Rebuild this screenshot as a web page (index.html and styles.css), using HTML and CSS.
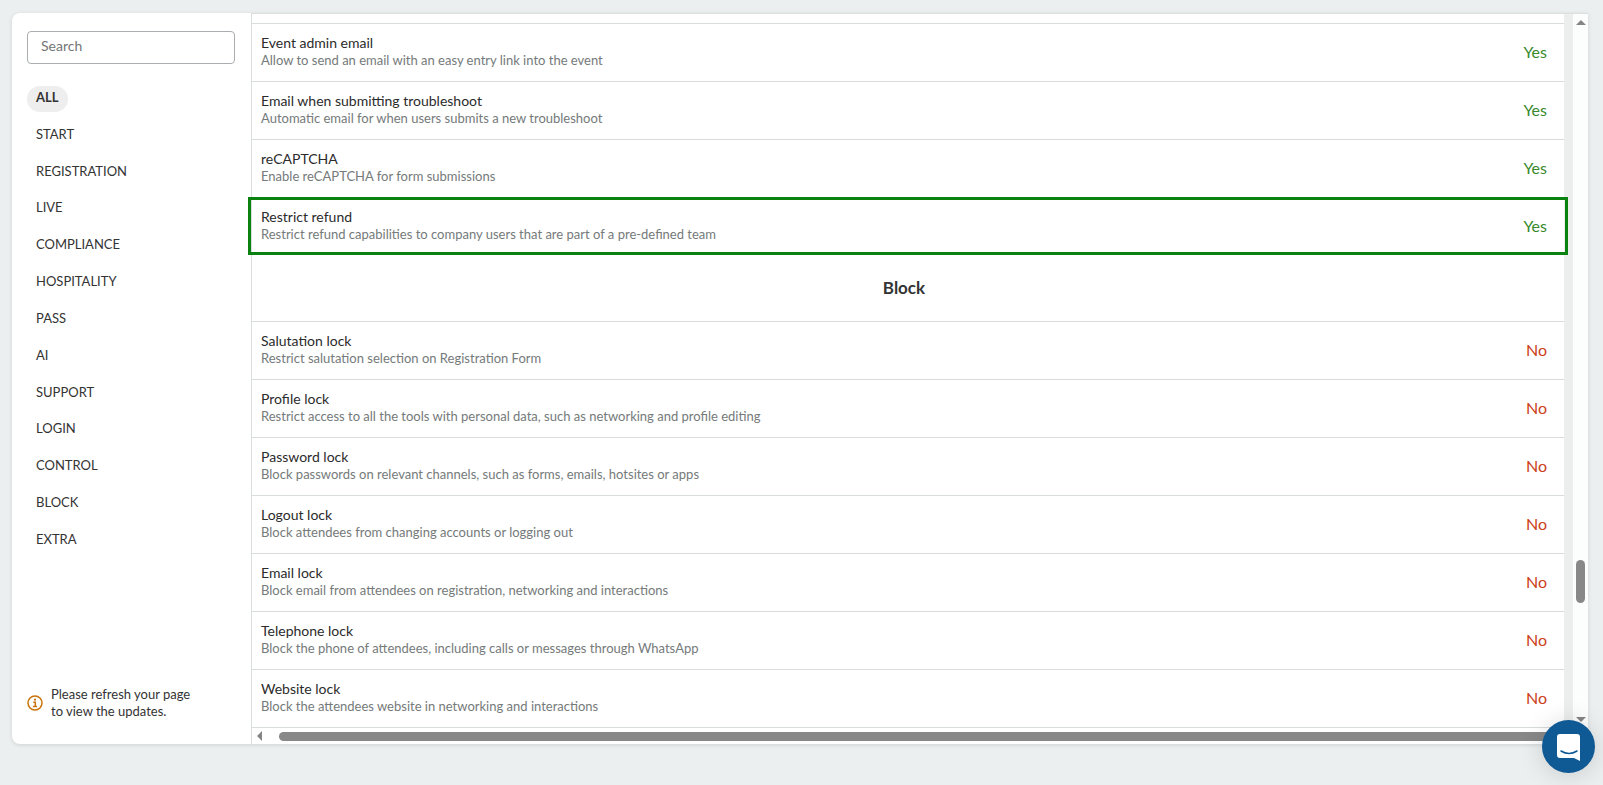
FILE: index.html
```html
<!DOCTYPE html>
<html lang="en">
<head>
    <meta charset="UTF-8">
    <meta name="viewport" content="width=device-width, initial-scale=1.0">
    <title>Event settings</title>
    <link rel="stylesheet" href="styles.css">
</head>
<body>
    <div class="panel">
        <aside class="sidebar">
            <input class="search" type="search" placeholder="Search" aria-label="Search">
            <nav class="menu">
                <a class="menu-item active" href="#all">ALL</a>
                <a class="menu-item" href="#start">START</a>
                <a class="menu-item" href="#registration">REGISTRATION</a>
                <a class="menu-item" href="#live">LIVE</a>
                <a class="menu-item" href="#compliance">COMPLIANCE</a>
                <a class="menu-item" href="#hospitality">HOSPITALITY</a>
                <a class="menu-item" href="#pass">PASS</a>
                <a class="menu-item" href="#ai">AI</a>
                <a class="menu-item" href="#support">SUPPORT</a>
                <a class="menu-item" href="#login">LOGIN</a>
                <a class="menu-item" href="#control">CONTROL</a>
                <a class="menu-item" href="#block">BLOCK</a>
                <a class="menu-item" href="#extra">EXTRA</a>
            </nav>
            <div class="notice">
                <svg class="notice-icon" viewBox="0 0 16 16" width="16" height="16" fill="none" stroke="#c9730c">
                    <circle cx="8" cy="8" r="7" stroke-width="1.5"/>
                    <path d="M6.2 7.2H8.3V11.2M5.9 11.4H10.1" stroke-width="1.5"/>
                    <circle cx="8" cy="4.7" r="1.1" fill="#c9730c" stroke="none"/>
                </svg>
                <p>Please refresh your page<br>to view the updates.</p>
            </div>
        </aside>

        <main class="content">
            <div class="main-column">
                <div class="settings">
                    <div class="row">
                        <div>
                            <div class="name">Event admin email</div>
                            <div class="about">Allow to send an email with an easy entry link into the event</div>
                        </div>
                        <span class="value yes">Yes</span>
                    </div>
                    <div class="row">
                        <div>
                            <div class="name">Email when submitting troubleshoot</div>
                            <div class="about">Automatic email for when users submits a new troubleshoot</div>
                        </div>
                        <span class="value yes">Yes</span>
                    </div>
                    <div class="row">
                        <div>
                            <div class="name">reCAPTCHA</div>
                            <div class="about">Enable reCAPTCHA for form submissions</div>
                        </div>
                        <span class="value yes">Yes</span>
                    </div>
                    <div class="row highlight">
                        <div>
                            <div class="name">Restrict refund</div>
                            <div class="about">Restrict refund capabilities to company users that are part of a pre-defined team</div>
                        </div>
                        <span class="value yes">Yes</span>
                    </div>
                    <h2 class="group-title" id="block">Block</h2>
                    <div class="row">
                        <div>
                            <div class="name">Salutation lock</div>
                            <div class="about">Restrict salutation selection on Registration Form</div>
                        </div>
                        <span class="value no">No</span>
                    </div>
                    <div class="row">
                        <div>
                            <div class="name">Profile lock</div>
                            <div class="about">Restrict access to all the tools with personal data, such as networking and profile editing</div>
                        </div>
                        <span class="value no">No</span>
                    </div>
                    <div class="row">
                        <div>
                            <div class="name">Password lock</div>
                            <div class="about">Block passwords on relevant channels, such as forms, emails, hotsites or apps</div>
                        </div>
                        <span class="value no">No</span>
                    </div>
                    <div class="row">
                        <div>
                            <div class="name">Logout lock</div>
                            <div class="about">Block attendees from changing accounts or logging out</div>
                        </div>
                        <span class="value no">No</span>
                    </div>
                    <div class="row">
                        <div>
                            <div class="name">Email lock</div>
                            <div class="about">Block email from attendees on registration, networking and interactions</div>
                        </div>
                        <span class="value no">No</span>
                    </div>
                    <div class="row">
                        <div>
                            <div class="name">Telephone lock</div>
                            <div class="about">Block the phone of attendees, including calls or messages through WhatsApp</div>
                        </div>
                        <span class="value no">No</span>
                    </div>
                    <div class="row">
                        <div>
                            <div class="name">Website lock</div>
                            <div class="about">Block the attendees website in networking and interactions</div>
                        </div>
                        <span class="value no">No</span>
                    </div>
                </div>
                <div class="scroll-x">
                    <svg width="6" height="10" viewBox="0 0 6 10"><path d="M0 5L5 0V10Z" fill="#858585"/></svg>
                    <span class="thumb-x"></span>
                </div>
            </div>
            <div class="scroll-y">
                <svg width="10" height="6" viewBox="0 0 10 6"><path d="M0 5L5 0L10 5Z" fill="#858585"/></svg>
                <span class="track-space"></span>
                <span class="thumb-y"></span>
                <span class="track-rest"></span>
                <svg width="10" height="6" viewBox="0 0 10 6"><path d="M0 0H10L5 5Z" fill="#858585"/></svg>
            </div>
        </main>
    </div>

    <button class="chat" type="button" aria-label="Open chat">
        <svg width="24" height="28" viewBox="0 0 24 28">
            <path d="M3 1H20Q23 1 23 4V28L17 25H3Q0 25 0 22V4Q0 1 3 1Z" fill="#fff"/>
            <path d="M4 18Q12 23 20 18" fill="none" stroke="#0f5994" stroke-width="1.5" stroke-linecap="round"/>
        </svg>
    </button>
</body>
</html>
```

FILE: styles.css
```css
* {
    box-sizing: border-box;
}
body {
    margin: 0;
    padding: 13px 15px 41px 12px;
    height: 100vh;
    overflow: hidden;
    font-family: Lato, sans-serif;
    font-size: 13px;
    color: #333;
    background: #ebeff0;
}
.panel {
    display: flex;
    height: 100%;
    background: #fff;
    border-radius: 8px 0 0 8px;
    box-shadow: 0 1px 4px rgba(0,0,0,0.12);
}
.sidebar {
    display: flex;
    flex-direction: column;
    flex: none;
    width: 239px;
    padding: 18px 16px 24px 15px;
}
.search {
    width: 100%;
    height: 33px;
    padding: 0 13px 5px;
    border: 1px solid #aaaeb0;
    border-radius: 4px;
    font: inherit;
    font-size: 14px;
    color: #333;
    background: #fff;
}
.search::placeholder {
    color: #757575;
}
.menu {
    display: flex;
    flex-direction: column;
    justify-content: space-between;
    align-items: flex-start;
    height: 468px;
    margin-top: 22px;
}
.menu-item {
    height: 26px;
    padding: 0 9px;
    border-radius: 13px;
    line-height: 23px;
    color: #333;
    text-decoration: none;
}
.menu-item.active {
    font-weight: bold;
    background: #eee;
}
.notice {
    display: flex;
    align-items: center;
    gap: 8px;
    margin-top: auto;
    line-height: 17px;
}
.notice p {
    margin: 0;
}
.content {
    display: flex;
    flex: 1;
    min-width: 0;
    border-top: 1px solid #dcdfe0;
    border-left: 1px solid #d9dddd;
    background: #eceeee;
}
.main-column {
    display: flex;
    flex-direction: column;
    flex: 1;
    min-width: 0;
}
.settings {
    flex: 1;
    min-height: 0;
    margin-right: 9px;
    padding-top: 9px;
    background: #fff;
}
.row {
    display: flex;
    justify-content: space-between;
    align-items: center;
    height: 58px;
    padding: 0 17px 3px 9px;
    border-top: 1px solid #d8dcdc;
}
.name {
    margin-bottom: 1px;
    font-size: 14px;
    line-height: 17px;
    color: #2b2b2b;
}
.about {
    line-height: 17px;
    color: #757a7a;
}
.value {
    font-size: 16px;
}
.yes {
    color: #37892c;
}
.no {
    color: #cb401b;
}
.highlight {
    margin: 0 -4px;
    padding: 0 18px 1px 10px;
    border: 3px solid #0b820f;
    position: relative;
}
.group-title {
    margin: 0;
    padding-right: 8px;
    height: 66px;
    font-size: 17px;
    line-height: 66px;
    text-align: center;
}
.scroll-x {
    display: flex;
    align-items: center;
    gap: 16px;
    height: 17px;
    padding-left: 5px;
    border-top: 1px solid #d8dcdc;
    background: #fff;
}
.thumb-x {
    flex: 1;
    height: 9px;
    border-radius: 5px 0 0 5px;
    background: #888;
}
.scroll-y {
    display: flex;
    flex-direction: column;
    align-items: center;
    width: 15px;
    padding: 6px 0 21px;
    background: #fcfdfd;
}
.thumb-y {
    width: 9px;
    height: 43px;
    border-radius: 5px;
    background: #888;
}
.track-space {
    flex: 535;
}
.track-rest {
    flex: 114;
}
.chat {
    position: fixed;
    right: 8px;
    bottom: 12px;
    display: flex;
    align-items: center;
    justify-content: center;
    width: 53px;
    height: 53px;
    padding: 0;
    border: none;
    border-radius: 50%;
    background: #0f5994;
    box-shadow: 0 2px 24px rgba(0,0,0,0.15);
    cursor: pointer;
}
```
